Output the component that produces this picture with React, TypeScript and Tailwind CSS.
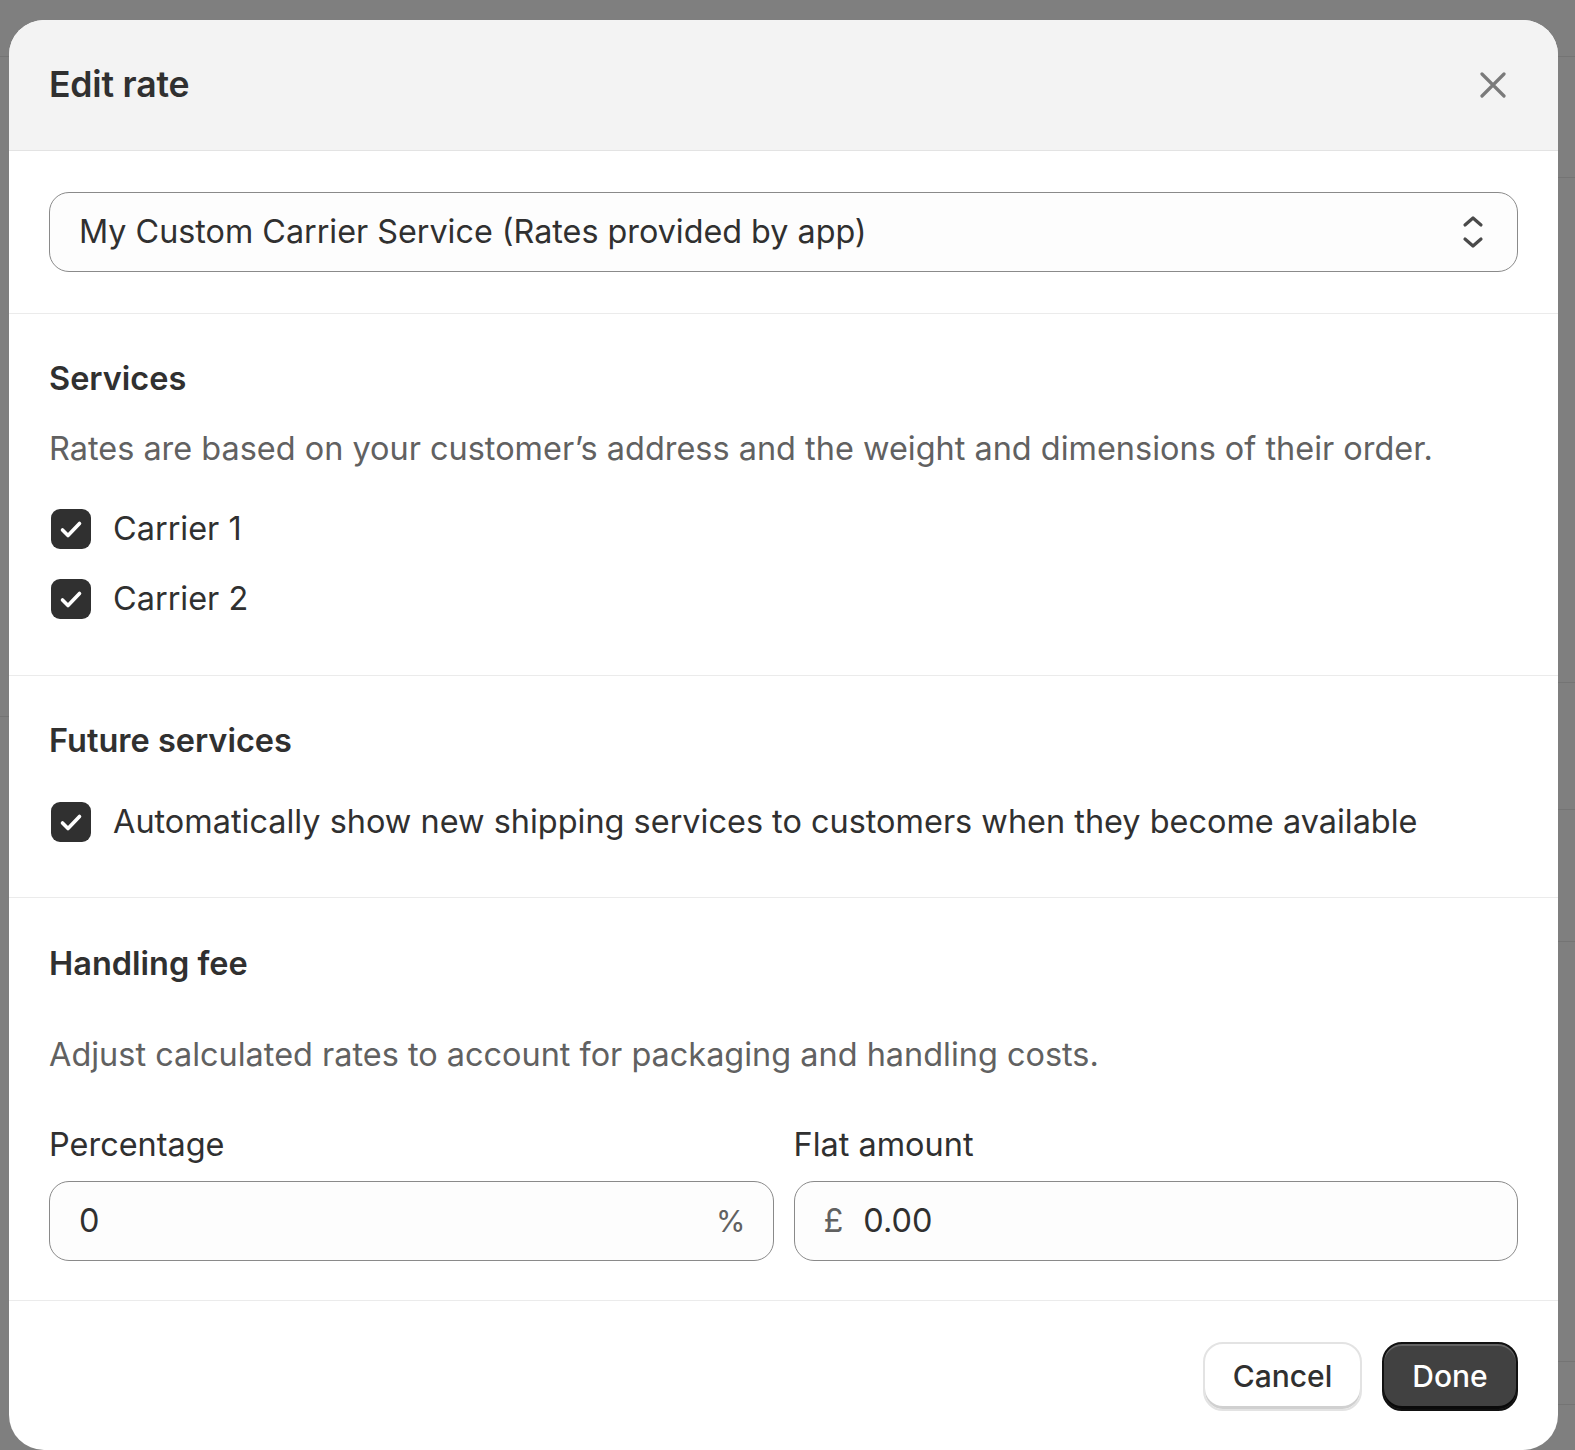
import React from "react";

const font = { fontFamily: "Inter, 'Noto Sans', sans-serif" };

const Check = () => (
  <span className="flex h-[40px] w-[40px] shrink-0 items-center justify-center rounded-[9px] bg-[#303030]">
    <svg width="40" height="40" viewBox="0 0 40 40" fill="none">
      <path d="M11.5 21 L17 26.5 L28.5 14.5" stroke="#fff" strokeWidth="3.6" strokeLinecap="round" strokeLinejoin="round" />
    </svg>
  </span>
);

const CheckRow = ({ label }: { label: string }) => (
  <label className="flex h-[50px] items-center gap-[22px] pl-[2px] text-[32.45px] text-[#303030]">
    <Check />
    <span>{label}</span>
  </label>
);

const Line = () => <div className="h-px bg-[#ebebeb]" />;

export default function App() {
  return (
    <div className="relative h-[1450px] w-[1575px] overflow-hidden bg-[#7f7f7f]" style={font}>
      {/* page behind the overlay */}
      <div className="flex h-full w-full justify-between">
        <div className="w-[9px]">
          <div className="h-[57px] border-b border-[#747474]" />
          <div className="h-[660px] border-b border-[#747474]" />
        </div>
        <div className="w-[17px]">
          <div className="h-[57px] border-b border-[#747474]" />
          <div className="h-[121px] border-b border-[#747474]" />
          <div className="h-[505px] border-b border-[#747474]" />
          <div className="h-[127px] border-b border-[#747474]" />
          <div className="h-[132px] border-b border-[#747474]" />
          <div className="h-[420px] border-b border-[#747474]" />
          <div className="h-[43px] border-b border-[#747474]" />
        </div>
      </div>

      {/* modal */}
      <div className="absolute left-[9px] top-[20px] flex h-[1430px] w-[1549px] flex-col overflow-hidden rounded-[35px] bg-white">
        <div className="flex h-[131px] shrink-0 items-center justify-between border-b border-[#e3e3e3] bg-[#f3f3f3] pl-[40px] pr-[52px]">
          <h1 className="text-[35.6px] font-semibold tracking-[-0.2px] text-[#303030]">Edit rate</h1>
          <svg width="26" height="26" viewBox="0 0 26 26" fill="none">
            <path d="M2 2 L24 24 M24 2 L2 24" stroke="#7a7a7a" strokeWidth="3.2" strokeLinecap="round" />
          </svg>
        </div>

        <div className="px-[40px] py-[41px]">
          <div className="flex h-[80px] items-center justify-between rounded-[20px] border border-[#8a8a8a] bg-[#fdfdfd] pl-[29px] pr-[33px]">
            <span className="text-[32.3px] text-[#303030]">My Custom Carrier Service (Rates provided by app)</span>
            <svg width="22" height="34" viewBox="0 0 22 34" fill="none">
              <path d="M3 10 L11 3 L19 10 M3 24 L11 31 L19 24" stroke="#4a4a4a" strokeWidth="3.2" strokeLinecap="round" strokeLinejoin="round" />
            </svg>
          </div>
        </div>
        <Line />

        <div className="flex flex-col px-[40px] pb-[51px] pt-[40px]">
          <h2 className="h-[50px] text-[32.5px] font-semibold leading-[50px] text-[#303030]">Services</h2>
          <p className="mt-[20px] h-[50px] text-[32.45px] leading-[50px] text-[#616161]">
            Rates are based on your customer’s address and the weight and dimensions of their order.
          </p>
          <div className="mt-[30px] flex flex-col gap-[20px]">
            <CheckRow label="Carrier 1" />
            <CheckRow label="Carrier 2" />
          </div>
        </div>
        <Line />

        <div className="flex flex-col px-[40px] pb-[50px] pt-[40px]">
          <h2 className="h-[50px] text-[32.5px] font-semibold leading-[50px] text-[#303030]">Future services</h2>
          <div className="mt-[31px]">
            <CheckRow label="Automatically show new shipping services to customers when they become available" />
          </div>
        </div>
        <Line />

        <div className="flex flex-col px-[40px] pb-[39px] pt-[41px]">
          <h2 className="h-[50px] text-[32.5px] font-semibold leading-[50px] text-[#303030]">Handling fee</h2>
          <p className="mt-[41px] h-[50px] text-[32.45px] leading-[50px] text-[#616161]">
            Adjust calculated rates to account for packaging and handling costs.
          </p>
          <div className="mt-[40px] grid grid-cols-2 gap-[20px]">
            <div className="flex flex-col gap-[11px]">
              <span className="h-[50px] text-[32.45px] leading-[50px] text-[#303030]">Percentage</span>
              <div className="flex h-[80px] items-center justify-between rounded-[20px] border border-[#8a8a8a] bg-[#fdfdfd] pl-[29px] pr-[27px]">
                <span className="text-[32.45px] text-[#303030]">0</span>
                <span className="text-[30px] text-[#616161]">%</span>
              </div>
            </div>
            <div className="flex flex-col gap-[11px]">
              <span className="h-[50px] text-[32.45px] leading-[50px] text-[#303030]">Flat amount</span>
              <div className="flex h-[80px] items-center gap-[20px] rounded-[20px] border border-[#8a8a8a] bg-[#fdfdfd] pl-[29px]">
                <span className="text-[32.45px] text-[#616161]">£</span>
                <span className="text-[32.45px] text-[#303030]">0.00</span>
              </div>
            </div>
          </div>
        </div>
        <Line />

        <div className="flex justify-end gap-[20px] px-[40px] pt-[41px]">
          <button className="h-[69px] w-[159px] rounded-[20px] border-2 border-[#e3e3e3] bg-white text-[30px] font-medium text-[#303030] shadow-[inset_0_-3px_0_#d0d0d0]">
            Cancel
          </button>
          <button className="h-[69px] w-[136px] rounded-[20px] border-[2.5px] border-[#111] bg-[#414141] text-[30px] font-medium text-white shadow-[inset_0_2px_0_rgba(255,255,255,0.18),inset_0_-3px_0_#0a0a0a]">
            Done
          </button>
        </div>
      </div>
    </div>
  );
}
